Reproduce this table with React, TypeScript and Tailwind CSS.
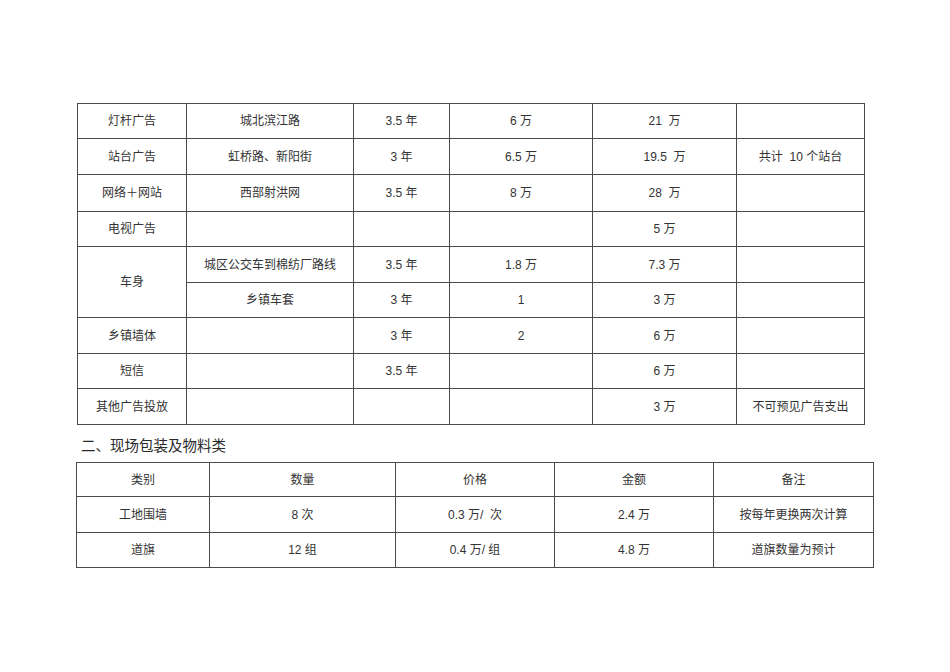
const font = {
  fontFamily: '"Liberation Sans", "Noto Sans CJK SC", sans-serif',
};

type Row = { h: string; cells: (string | null)[] };

const adRows: Row[] = [
  { h: "h-[35px]", cells: ["灯杆广告", "城北滨江路", "3.5 年", "6 万", "21  万", ""] },
  { h: "h-[36px]", cells: ["站台广告", "虹桥路、新阳街", "3 年", "6.5 万", "19.5  万", "共计  10 个站台"] },
  { h: "h-[37px]", cells: ["网络＋网站", "西部射洪网", "3.5 年", "8 万", "28  万", ""] },
  { h: "h-[35px]", cells: ["电视广告", "", "", "", "5 万", ""] },
];

const adRowsB: Row[] = [
  { h: "h-[36px]", cells: ["乡镇墙体", "", "3 年", "2", "6 万", ""] },
  { h: "h-[35px]", cells: ["短信", "", "3.5 年", "", "6 万", ""] },
  { h: "h-[36px]", cells: ["其他广告投放", "", "", "", "3 万", "不可预见广告支出"] },
];

const td = "border border-[#4a4a4a] text-center align-middle p-0 whitespace-pre";

export default function App() {
  return (
    <div className="w-[950px] h-[672px] bg-white text-[#333]" style={font}>
      <div className="pt-[103px] pl-[77px]">
        <table className="border-collapse table-fixed w-[787px] text-[12px]">
          <colgroup>
            <col className="w-[109px]" />
            <col className="w-[167px]" />
            <col className="w-[96px]" />
            <col className="w-[143px]" />
            <col className="w-[144px]" />
            <col className="w-[128px]" />
          </colgroup>
          <tbody>
            {adRows.map((r, i) => (
              <tr key={i} className={r.h}>
                {r.cells.map((c, j) => (
                  <td key={j} className={td}>{c}</td>
                ))}
              </tr>
            ))}
            <tr className="h-[36px]">
              <td rowSpan={2} className={td}>车身</td>
              <td className={td}>城区公交车到棉纺厂路线</td>
              <td className={td}>3.5 年</td>
              <td className={td}>1.8 万</td>
              <td className={td}>7.3 万</td>
              <td className={td}></td>
            </tr>
            <tr className="h-[35px]">
              <td className={td}>乡镇车套</td>
              <td className={td}>3 年</td>
              <td className={td}>1</td>
              <td className={td}>3 万</td>
              <td className={td}></td>
            </tr>
            {adRowsB.map((r, i) => (
              <tr key={i} className={r.h}>
                {r.cells.map((c, j) => (
                  <td key={j} className={td}>{c}</td>
                ))}
              </tr>
            ))}
          </tbody>
        </table>
      </div>

      <div className="pl-[81px] mt-[11px] mb-[6px] h-[20px] leading-[20px] text-[14.5px] text-[#2a2a2a]">
        二、现场包装及物料类
      </div>

      <div className="pl-[76px]">
        <table className="border-collapse table-fixed w-[797px] text-[12px]">
          <colgroup>
            <col className="w-[133px]" />
            <col className="w-[186px]" />
            <col className="w-[159px]" />
            <col className="w-[159px]" />
            <col className="w-[160px]" />
          </colgroup>
          <tbody>
            <tr className="h-[34px]">
              <td className={td}>类别</td>
              <td className={td}>数量</td>
              <td className={td}>价格</td>
              <td className={td}>金额</td>
              <td className={td}>备注</td>
            </tr>
            <tr className="h-[36px]">
              <td className={td}>工地围墙</td>
              <td className={td}>8 次</td>
              <td className={td}>0.3 万/  次</td>
              <td className={td}>2.4 万</td>
              <td className={td}>按每年更换两次计算</td>
            </tr>
            <tr className="h-[35px]">
              <td className={td}>道旗</td>
              <td className={td}>12 组</td>
              <td className={td}>0.4 万/ 组</td>
              <td className={td}>4.8 万</td>
              <td className={td}>道旗数量为预计</td>
            </tr>
          </tbody>
        </table>
      </div>
    </div>
  );
}
